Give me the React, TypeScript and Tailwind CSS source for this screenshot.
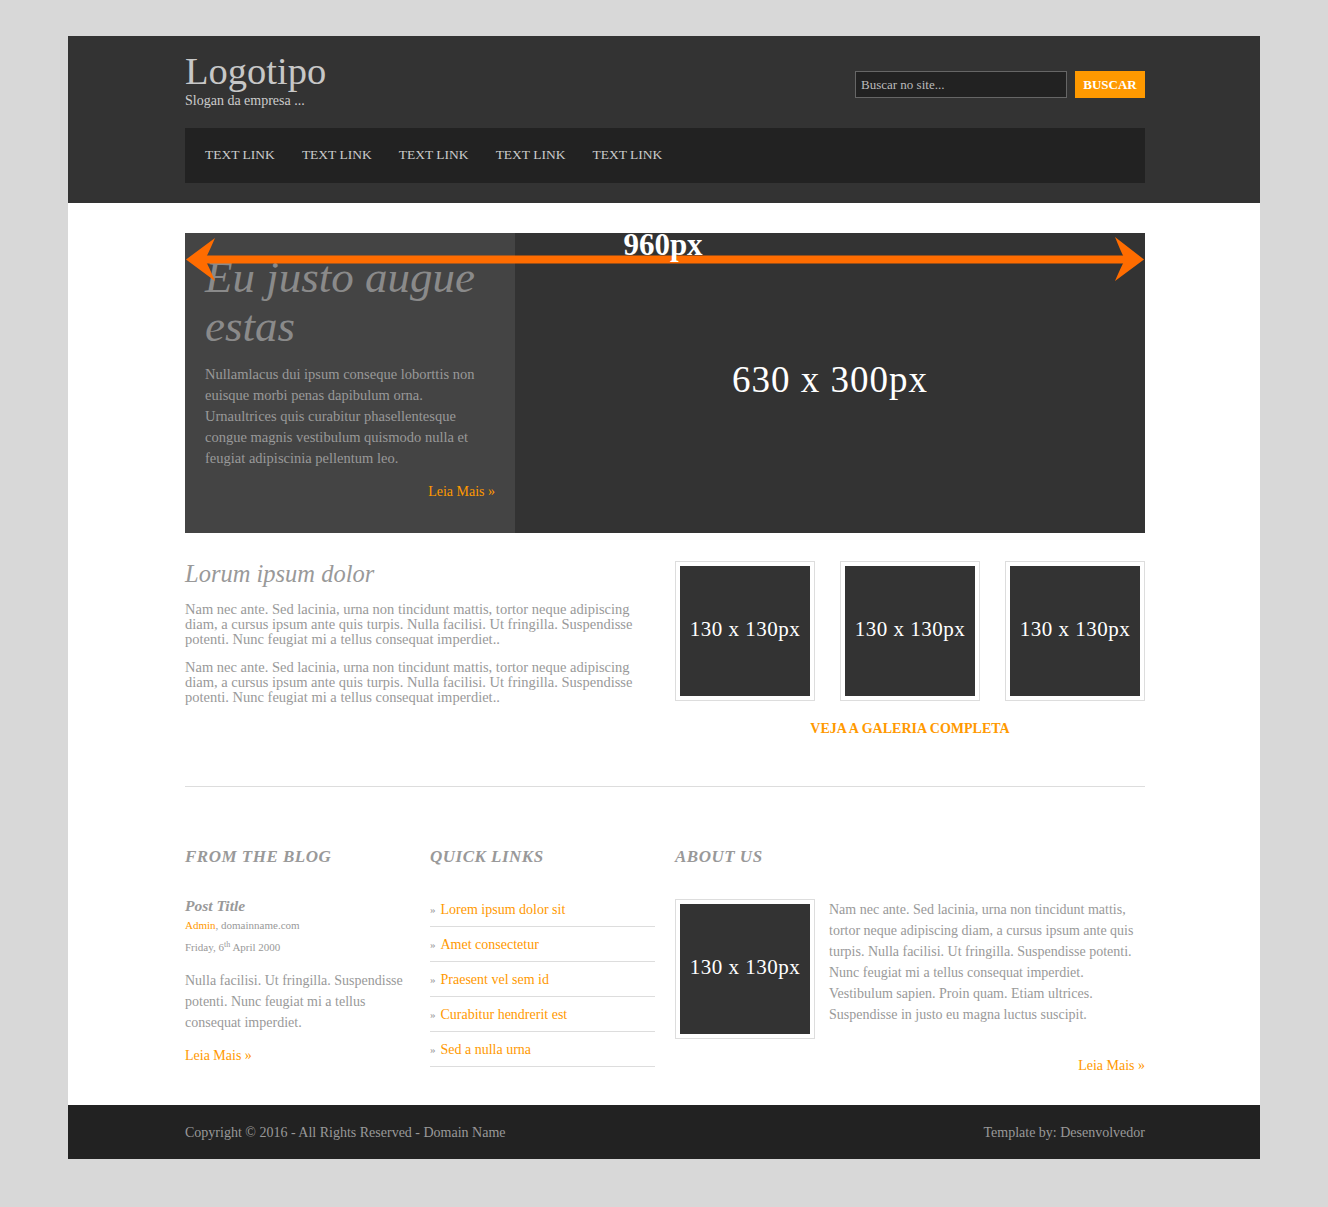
import React from "react";

const serif = "font-['Georgia','Liberation_Serif','DejaVu_Serif',serif]";

const Thumb: React.FC = () => (
  <div className="border border-[#dddddd] p-[4px] bg-white">
    <div className="w-[130px] h-[130px] bg-[#333333] flex items-center justify-center text-white text-[21px] tracking-[0.5px] pb-[3px]">
      130 x 130px
    </div>
  </div>
);

const Arrow: React.FC = () => (
  <svg className="absolute left-0 top-[1px] pointer-events-none" width="960" height="48" viewBox="0 0 960 48">
    <rect x="14" y="21.5" width="932" height="8" fill="#ff6c00" />
    <path d="M1 25.5 L30 4 Q24 18 20 25.5 Q24 33 30 47 Z" fill="#ff6c00" />
    <path d="M959 25.5 L930 3 Q936 18 940 25.5 Q936 33 930 47 Z" fill="#ff6c00" />
  </svg>
);

const quickLinks = [
  "Lorem ipsum dolor sit",
  "Amet consectetur",
  "Praesent vel sem id",
  "Curabitur hendrerit est",
  "Sed a nulla urna",
];

const navItems = ["TEXT LINK", "TEXT LINK", "TEXT LINK", "TEXT LINK", "TEXT LINK"];

const App: React.FC = () => {
  return (
    <div className={`min-h-[1207px] bg-[#d8d8d8] pt-[36px] pb-[48px] ${serif}`}>
      <div className="w-[1192px] mx-auto bg-white">
        {/* header */}
        <header className="bg-[#333333] pb-[20px]">
          <div className="w-[960px] ml-[117px]">
            <div className="flex justify-between items-start h-[92px]">
              <div className="pt-[16px]">
                <h1 className="text-[38.5px] leading-[39px] text-[#c7c7c7]">Logotipo</h1>
                <p className="mt-[3px] text-[14px] leading-[14px] text-[#cccccc]">Slogan da empresa ...</p>
              </div>
              <div className="flex items-center gap-[8px] pt-[35px]">
                <input
                  placeholder="Buscar no site..."
                  className="w-[212px] h-[27px] bg-[#222222] border border-[#666666] px-[5px] text-[13px] text-[#cccccc] placeholder:text-[#bbbbbb] outline-none"
                />
                <button className="h-[27px] w-[70px] bg-[#ff9900] text-white text-[13px] font-bold">BUSCAR</button>
              </div>
            </div>
            <nav className="bg-[#222222] h-[55px] flex items-center pl-[20px] gap-[27px]">
              {navItems.map((n, i) => (
                <a key={i} className="text-[13.5px] text-[#cccccc]">{n}</a>
              ))}
            </nav>
          </div>
        </header>

        <main className="w-[960px] ml-[117px]">
          {/* hero */}
          <section className="relative mt-[30px] h-[300px] flex">
            <div className="w-[330px] bg-[#444444] px-[20px] pt-[20px] flex flex-col">
              <h2 className="text-[45px] leading-[49px] italic text-[#8a8a8a]">Eu justo augue estas</h2>
              <p className="mt-[13px] text-[14.5px] leading-[21px] text-[#999999]">
                Nullamlacus dui ipsum conseque loborttis non euisque morbi penas dapibulum orna. Urnaultrices quis
                curabitur phasellentesque congue magnis vestibulum quismodo nulla et feugiat adipiscinia pellentum leo.
              </p>
              <a className="mt-[12px] self-end text-[14px] text-[#ff9900]">Leia Mais »</a>
            </div>
            <div className="flex-1 bg-[#333333] flex items-center justify-center text-white text-[37px] tracking-[1px] pb-[6px]">
              630 x 300px
            </div>
            <Arrow />
            <div className="absolute left-0 right-0 top-[-6px] text-center text-white text-[31px] font-bold leading-[36px] pr-[4px]">
              960px
            </div>
          </section>

          {/* middle */}
          <section className="flex justify-between mt-[28px]">
            <div className="w-[450px]">
              <h3 className="text-[24.5px] leading-[26px] italic text-[#999999]">Lorum ipsum dolor</h3>
              <p className="mt-[15px] text-[14.5px] leading-[15px] text-[#999999]">
                Nam nec ante. Sed lacinia, urna non tincidunt mattis, tortor neque adipiscing diam, a cursus ipsum ante
                quis turpis. Nulla facilisi. Ut fringilla. Suspendisse potenti. Nunc feugiat mi a tellus consequat
                imperdiet..
              </p>
              <p className="mt-[13px] text-[14.5px] leading-[15px] text-[#999999]">
                Nam nec ante. Sed lacinia, urna non tincidunt mattis, tortor neque adipiscing diam, a cursus ipsum ante
                quis turpis. Nulla facilisi. Ut fringilla. Suspendisse potenti. Nunc feugiat mi a tellus consequat
                imperdiet..
              </p>
            </div>
            <div className="w-[470px]">
              <div className="flex justify-between">
                <Thumb />
                <Thumb />
                <Thumb />
              </div>
              <p className="mt-[17px] text-center text-[14px] font-bold text-[#ff9900]">VEJA A GALERIA COMPLETA</p>
            </div>
          </section>

          <hr className="mt-[47px] border-0 border-t border-[#dddddd]" />

          {/* bottom columns */}
          <section className="flex gap-[20px] pt-[60px] pb-[29px]">
            <div className="w-[225px]">
              <h4 className="text-[17px] font-bold italic tracking-[0.5px] text-[#999999] leading-[20px]">FROM THE BLOG</h4>
              <h5 className="mt-[30px] text-[15.5px] font-bold italic text-[#999999] leading-[18px]">Post Title</h5>
              <p className="mt-[3px] text-[11px] text-[#999999] leading-[14px]">
                <span className="text-[#ff9900]">Admin</span>, domainname.com
              </p>
              <p className="mt-[8px] text-[11px] text-[#999999] leading-[14px]">
                Friday, 6<sup className="text-[8px]">th</sup> April 2000
              </p>
              <p className="mt-[16px] text-[14px] leading-[21px] text-[#999999]">
                Nulla facilisi. Ut fringilla. Suspendisse potenti. Nunc feugiat mi a tellus consequat imperdiet.
              </p>
              <a className="block mt-[12px] text-[14px] text-[#ff9900]">Leia Mais »</a>
            </div>
            <div className="w-[225px]">
              <h4 className="text-[17px] font-bold italic tracking-[0.5px] text-[#999999] leading-[20px]">QUICK LINKS</h4>
              <ul className="mt-[25px]">
                {quickLinks.map((l) => (
                  <li key={l} className="border-b border-[#dddddd] h-[35px] flex items-center text-[14px]">
                    <span className="text-[#999999] text-[11px] mr-[5px]">»</span>
                    <a className="text-[#ff9900]">{l}</a>
                  </li>
                ))}
              </ul>
            </div>
            <div className="w-[470px]">
              <h4 className="text-[17px] font-bold italic tracking-[0.5px] text-[#999999] leading-[20px]">ABOUT US</h4>
              <div className="mt-[32px] flex gap-[14px]">
                <Thumb />
                <p className="flex-1 text-[14px] leading-[21px] text-[#999999]">
                  Nam nec ante. Sed lacinia, urna non tincidunt mattis, tortor neque adipiscing diam, a cursus ipsum ante
                  quis turpis. Nulla facilisi. Ut fringilla. Suspendisse potenti. Nunc feugiat mi a tellus consequat
                  imperdiet. Vestibulum sapien. Proin quam. Etiam ultrices. Suspendisse in justo eu magna luctus suscipit.
                </p>
              </div>
              <p className="mt-[16px] text-right text-[14px] text-[#ff9900]">Leia Mais »</p>
            </div>
          </section>
        </main>

        <footer className="bg-[#222222] h-[54px]">
          <div className="w-[960px] ml-[117px] h-full flex items-center justify-between text-[14px] text-[#999999]">
            <span>Copyright © 2016 - All Rights Reserved - Domain Name</span>
            <span>Template by: Desenvolvedor</span>
          </div>
        </footer>
      </div>
    </div>
  );
};

export default App;
